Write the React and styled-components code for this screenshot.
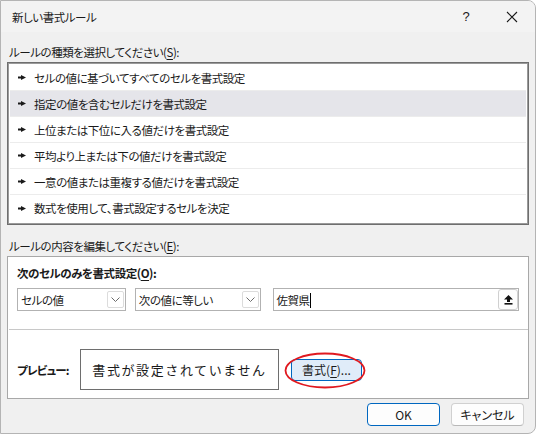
import React from 'react';
import styled, { createGlobalStyle } from 'styled-components';

const font = `"Noto Sans CJK JP", "Noto Sans", sans-serif`;

const rules = [
  'セルの値に基づいてすべてのセルを書式設定',
  '指定の値を含むセルだけを書式設定',
  '上位または下位に入る値だけを書式設定',
  '平均より上または下の値だけを書式設定',
  '一意の値または重複する値だけを書式設定',
  '数式を使用して、書式設定するセルを決定',
];

const RuleArrow = () => (
  <svg width="8" height="5" viewBox="0 0 8 5">
    <rect x="0" y="1.5" width="4" height="2" fill="#1a1a1a" />
    <polygon points="3,0 8,2.5 3,5" fill="#1a1a1a" />
  </svg>
);

const Chevron = () => (
  <svg width="9" height="5" viewBox="0 0 9 5">
    <polyline points="0.5,0.5 4.5,4.5 8.5,0.5" fill="none" stroke="#6b6b6b" strokeWidth="1" />
  </svg>
);

const UpArrow = () => (
  <svg width="9" height="10" viewBox="0 0 9 10">
    <polygon points="4.5,0 9,4.5 6,4.5 6,7 3,7 3,4.5 0,4.5" fill="#111" />
    <rect x="0.5" y="8" width="8" height="1.6" fill="#111" />
  </svg>
);

const App = () => {
  return (
    <>
      <GlobalStyle />
      <Dialog>
        <TitleBar>
          <Title>新しい書式ルール</Title>
          <TitleButton>?</TitleButton>
          <TitleButton>
            <svg width="12" height="12" viewBox="0 0 12 12">
              <path d="M1 1 L11 11 M11 1 L1 11" stroke="#1a1a1a" strokeWidth="1.1" />
            </svg>
          </TitleButton>
        </TitleBar>

        <Body>
          <SectionLabel $top={12}>
            ルールの種類を選択してください(<u>S</u>):
          </SectionLabel>
          <RuleList>
            {rules.map((rule, i) => (
              <RuleRow key={rule} $selected={i === 1} $last={i === rules.length - 1}>
                <RuleArrow />
                <span>{rule}</span>
              </RuleRow>
            ))}
          </RuleList>

          <SectionLabel $top={13}>
            ルールの内容を編集してください(<u>E</u>):
          </SectionLabel>
          <EditPanel>
            <PanelHead>
              次のセルのみを書式設定(<u>O</u>):
            </PanelHead>
            <ControlRow>
              <Select $width={109}>
                <span>セルの値</span>
                <ChevronBox>
                  <Chevron />
                </ChevronBox>
              </Select>
              <Select $width={126}>
                <span>次の値に等しい</span>
                <ChevronBox>
                  <Chevron />
                </ChevronBox>
              </Select>
              <TextInput>
                <span>
                  佐賀県<Caret />
                </span>
                <RefButton>
                  <UpArrow />
                </RefButton>
              </TextInput>
            </ControlRow>
            <Divider />
            <PreviewRow>
              <PreviewLabel>プレビュー:</PreviewLabel>
              <PreviewBox>書式が設定されていません</PreviewBox>
              <FormatWrap>
                <FormatButton>
                  書式(<u>F</u>)...
                </FormatButton>
                <Highlight viewBox="0 0 82 37">
                  <ellipse cx="41" cy="18.5" rx="39.5" ry="17" fill="none" stroke="#e0191f" strokeWidth="1.8" />
                </Highlight>
              </FormatWrap>
            </PreviewRow>
          </EditPanel>
        </Body>

        <Footer>
          <DialogButton $primary>OK</DialogButton>
          <DialogButton>キャンセル</DialogButton>
        </Footer>
      </Dialog>
    </>
  );
};

// styled components
const GlobalStyle = createGlobalStyle`
  body {
    margin: 0;
    background: #ffffff;
    font-family: ${font};
    color: #1a1a1a;
  }
`;

const Dialog = styled.div`
  width: 534px;
  height: 432px;
  border: 1px solid #b4b4b4;
  border-radius: 0 8px 8px 0;
  background: #f0f0f0;
  display: flex;
  flex-direction: column;
  overflow: hidden;
  font-family: ${font};
  font-size: 11.5px;
  letter-spacing: -0.45px;
  font-feature-settings: 'palt';
`;

const TitleBar = styled.div`
  height: 31px;
  flex-shrink: 0;
  background: #f3f3f3;
  display: flex;
  align-items: center;
  padding-left: 11px;
`;

const Title = styled.div`
  flex: 1;
`;

const TitleButton = styled.div`
  width: 46px;
  height: 31px;
  display: flex;
  align-items: center;
  justify-content: center;
  font-size: 13px;
  font-family: 'Liberation Sans', sans-serif;
`;

const Body = styled.div`
  padding: 0 6px 0 6px;
  display: flex;
  flex-direction: column;
`;

const SectionLabel = styled.div`
  margin-top: ${(p) => p.$top}px;
  padding-left: 2px;
  height: 17px;
  line-height: 17px;
  margin-bottom: 1px;

  u {
    text-underline-offset: 2px;
  }
`;

const RuleList = styled.div`
  height: 157px;
  background: #fff;
  border: 1px solid #6e6e6e;
  box-shadow: inset 0 0 0 1px #9a9a9a;
  padding: 2px 2px;
  display: flex;
  flex-direction: column;
`;

const RuleRow = styled.div`
  height: 26px;
  flex-shrink: 0;
  box-sizing: border-box;
  display: flex;
  align-items: center;
  gap: 8px;
  padding-left: 8px;
  background: ${(p) => (p.$selected ? '#e5e5ea' : 'transparent')};
  border-bottom: ${(p) => (p.$last ? 'none' : '1px solid #ececec')};
`;

const EditPanel = styled.div`
  height: 141px;
  background: #fff;
  border: 1px solid #a8a8a8;
  display: flex;
  flex-direction: column;
`;

const PanelHead = styled.div`
  font-weight: 700;
  padding: 8px 0 0 9px;
  height: 17px;
  line-height: 17px;

  u {
    text-underline-offset: 2px;
  }
`;

const ControlRow = styled.div`
  display: flex;
  align-items: center;
  padding: 6px 9px 0 9px;
`;

const Select = styled.div`
  width: ${(p) => p.$width}px;
  height: 23px;
  box-sizing: border-box;
  border: 1px solid #b2b2b2;
  display: flex;
  align-items: center;
  justify-content: space-between;
  padding: 0 1px 0 3px;
  margin-right: 9px;
  background: #fff;
`;

const ChevronBox = styled.div`
  width: 17px;
  height: 17px;
  box-sizing: border-box;
  border: 1px solid #dcdcdc;
  border-radius: 2px;
  display: flex;
  align-items: center;
  justify-content: center;
`;

const TextInput = styled.div`
  margin-left: 3px;
  width: 247px;
  height: 23px;
  box-sizing: border-box;
  border: 1px solid #b2b2b2;
  display: flex;
  align-items: center;
  justify-content: space-between;
  padding: 0 0 0 3px;
`;

const Caret = styled.span`
  display: inline-block;
  width: 1px;
  height: 15px;
  background: #000;
  vertical-align: -3px;
`;

const RefButton = styled.div`
  width: 20px;
  height: 21px;
  box-sizing: border-box;
  border: 1px solid #d0d0d0;
  border-radius: 3px;
  background: #fdfdfd;
  display: flex;
  align-items: center;
  justify-content: center;
`;

const Divider = styled.div`
  height: 1px;
  background: #c8c8c8;
  margin: 18px 0 0 1px;
`;

const PreviewRow = styled.div`
  display: flex;
  align-items: center;
  padding: 19px 0 0 9px;
`;

const PreviewLabel = styled.div`
  width: 63px;
  font-weight: 700;
  letter-spacing: -0.8px;
`;

const PreviewBox = styled.div`
  width: 199px;
  height: 41px;
  box-sizing: border-box;
  border: 1px solid #6e6e6e;
  display: flex;
  align-items: center;
  justify-content: center;
  font-size: 13px;
  letter-spacing: 1.6px;
  font-feature-settings: normal;
`;

const FormatWrap = styled.div`
  position: relative;
  margin-left: 12px;
`;

const FormatButton = styled.div`
  width: 71px;
  height: 22px;
  box-sizing: border-box;
  border: 1px solid #0067c0;
  border-radius: 4px;
  background: #e0ecf9;
  display: flex;
  align-items: center;
  justify-content: center;
  font-size: 12px;
  letter-spacing: 0;

  u {
    text-underline-offset: 2px;
  }
`;

const Highlight = styled.svg`
  position: absolute;
  left: -7px;
  top: -7px;
  width: 82px;
  height: 37px;
  pointer-events: none;
`;

const Footer = styled.div`
  display: flex;
  justify-content: flex-end;
  gap: 11px;
  padding: 4px 11px 0 0;
`;

const DialogButton = styled.div`
  width: 73px;
  height: 23px;
  box-sizing: border-box;
  border: 1px solid ${(p) => (p.$primary ? '#0067c0' : '#d0d0d0')};
  border-bottom-color: ${(p) => (p.$primary ? '#0067c0' : '#b8b8b8')};
  border-radius: 4px;
  background: #fdfdfd;
  display: flex;
  align-items: center;
  justify-content: center;
  font-size: 12px;
  letter-spacing: 0;
`;

export default App;
